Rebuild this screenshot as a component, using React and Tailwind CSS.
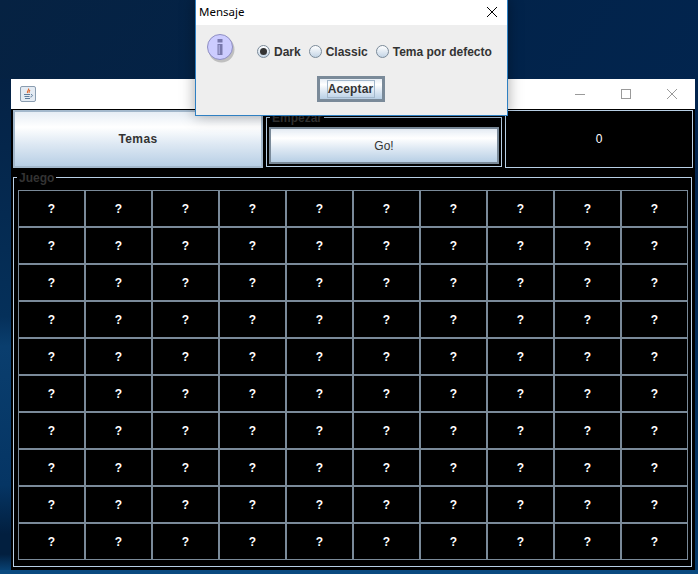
const cols = Array.from({ length: 10 });
const rows = Array.from({ length: 10 });

const metal = "bg-[linear-gradient(180deg,#e6edf5_0%,#ffffff_28%,#dde8f3_60%,#b8cfe5_100%)]";

function JavaIcon() {
  return (
    <svg width="16" height="16" viewBox="0 0 16 16" className="block">
      <rect x="0.5" y="0.5" width="15" height="15" rx="1.5" fill="#e4ebf3" stroke="#8a9db0" />
      <path d="M8.5 2.5c1 1.5-2 2.5-1 4.5M10 4c-1 1-1.5 1.5-.8 3" stroke="#e0662a" strokeWidth="1.1" fill="none" />
      <path d="M4 8.5h6M4.5 10.5h5M5 12.5h5" stroke="#5d7c9c" strokeWidth="1.1" />
      <path d="M11 8.5c2 0 2 2-.5 2.5" stroke="#5d7c9c" fill="none" />
    </svg>
  );
}

function InfoIcon() {
  return (
    <svg width="32" height="32" viewBox="0 0 32 32" className="block">
      <circle cx="14.5" cy="15.5" r="13" fill="#777777" opacity="0.4" />
      <circle cx="13" cy="13" r="12.5" fill="#ccccff" stroke="#8e8ec2" strokeWidth="1" />
      <rect x="10.5" y="5" width="5" height="3.5" fill="#7878ac" />
      <rect x="10.5" y="10" width="5" height="11" fill="#7878ac" />
      <rect x="11.5" y="11" width="1.5" height="9" fill="#a5a5d8" />
    </svg>
  );
}

function Radio({ checked, label }) {
  return (
    <div className="flex items-center gap-[4px]">
      <span className="flex h-[13px] w-[13px] items-center justify-center rounded-full border border-[#7a8a99] bg-[linear-gradient(180deg,#ffffff,#c4d5e6)]">
        {checked && <span className="h-[7px] w-[7px] rounded-full bg-[#333333]" />}
      </span>
      <span className="text-[12px] font-bold leading-none text-[#333333]">{label}</span>
    </div>
  );
}

function Legend({ children }) {
  return (
    <span className="absolute left-[3px] top-[-7px] bg-black px-[2px] text-[12px] font-bold leading-[14px] text-[#333333]">
      {children}
    </span>
  );
}

export default function App() {
  return (
    <div className="relative h-[574px] w-[698px] overflow-hidden bg-[linear-gradient(125deg,#062242_0%,#02234a_45%,#02254f_75%,#053a6b_100%)] font-['Liberation_Sans',Arial,sans-serif]">
      <div className="absolute bottom-0 left-0 h-[495px] w-[11px] bg-[linear-gradient(180deg,#052245_0%,#05305a_48%,#0a3e6e_54%,#053564_82%,#021f3f_92%,#021f3f_96%,#0a4a80_100%)]" />
      <div className="absolute bottom-0 left-0 h-[4px] w-full bg-[#0a4a80]" />

      {/* Main window */}
      <div className="absolute left-[11px] top-[79px] flex h-[491px] w-[684px] flex-col bg-black">
        <div className="flex h-[30px] shrink-0 items-center justify-between bg-white pl-[9px]">
          <JavaIcon />
          <div className="flex h-full items-center">
            <div className="flex w-[46px] justify-center">
              <span className="h-px w-[10px] bg-[#9a9a9a]" />
            </div>
            <div className="flex w-[46px] justify-center">
              <span className="h-[10px] w-[10px] border border-[#9a9a9a]" />
            </div>
            <div className="flex w-[46px] justify-center">
              <svg width="12" height="12" viewBox="0 0 12 12">
                <path d="M1 1l10 10M11 1L1 11" stroke="#9a9a9a" strokeWidth="1" />
              </svg>
            </div>
          </div>
        </div>

        <div className="flex flex-1 flex-col pl-[2px] pr-[2px] pt-[1px]">
          <div className="flex h-[58px] shrink-0">
            <div className={"flex w-[250px] items-center justify-center border-2 border-[#a3b8cc] text-[12px] font-bold tracking-[0.4px] text-[#333333] " + metal}>
              Temas
            </div>
            <div className="relative ml-[3px] mt-[7px] h-[50px] w-[236px] border border-[#b8cfe5] bg-black p-[2px] pt-[9px]">
              <Legend>Empezar</Legend>
              <div className={"flex h-[37px] items-center justify-center border-2 border-[#7a8a99] text-[12px] font-normal text-[#333333] " + metal}>
                Go!
              </div>
            </div>
            <div className="ml-[3px] flex w-[188px] items-center justify-center border border-[#b8cfe5] text-[12px] leading-none text-white">
              0
            </div>
          </div>

          <div className="relative mt-[9px] h-[390px] w-[679px] border border-[#b8cfe5] pl-[4px] pt-[12px]">
            <Legend>Juego</Legend>
            <div className="grid w-[670px] grid-cols-[repeat(10,67px)] grid-rows-[repeat(10,37px)]">
              {rows.map((_, r) =>
                cols.map((_, c) => (
                  <div
                    key={r + "-" + c}
                    className="flex items-center justify-center border border-[#7a8a99] bg-black text-[12px] font-bold text-white"
                  >
                    ?
                  </div>
                ))
              )}
            </div>
          </div>
        </div>
      </div>

      {/* Dialog */}
      <div className="absolute left-[195px] top-[-2px] flex h-[118px] w-[313px] flex-col border border-[#2f80c2] bg-[#eeeeee] shadow-[0_0_14px_rgba(0,0,0,0.35)]">
        <div className="flex h-[26px] shrink-0 items-center justify-between bg-white pl-[3px] pr-[9px]">
          <span className="font-['Noto_Sans',sans-serif] text-[11.5px] leading-none text-black">Mensaje</span>
          <svg width="12" height="12" viewBox="0 0 12 12">
            <path d="M1 1l10 10M11 1L1 11" stroke="#000000" strokeWidth="1" />
          </svg>
        </div>
        <div className="flex flex-1 flex-col">
          <div className="flex h-[51px] items-start pl-[11px] pt-[9px]">
            <InfoIcon />
            <div className="ml-[18px] mt-[11px] flex gap-[8px]">
              <Radio checked label="Dark" />
              <Radio label="Classic" />
              <Radio label="Tema por defecto" />
            </div>
          </div>
          <div className="flex justify-center">
            <div className={"ml-[-2px] flex h-[26px] w-[68px] items-center justify-center border-[3px] border-[#7a8a99] px-[7px] " + metal}>
              <span className="flex h-[18px] w-full items-center justify-center border border-[#a3b8cc] text-[12px] font-bold tracking-[0.1px] text-[#333333]">
                Aceptar
              </span>
            </div>
          </div>
        </div>
      </div>
    </div>
  );
}
